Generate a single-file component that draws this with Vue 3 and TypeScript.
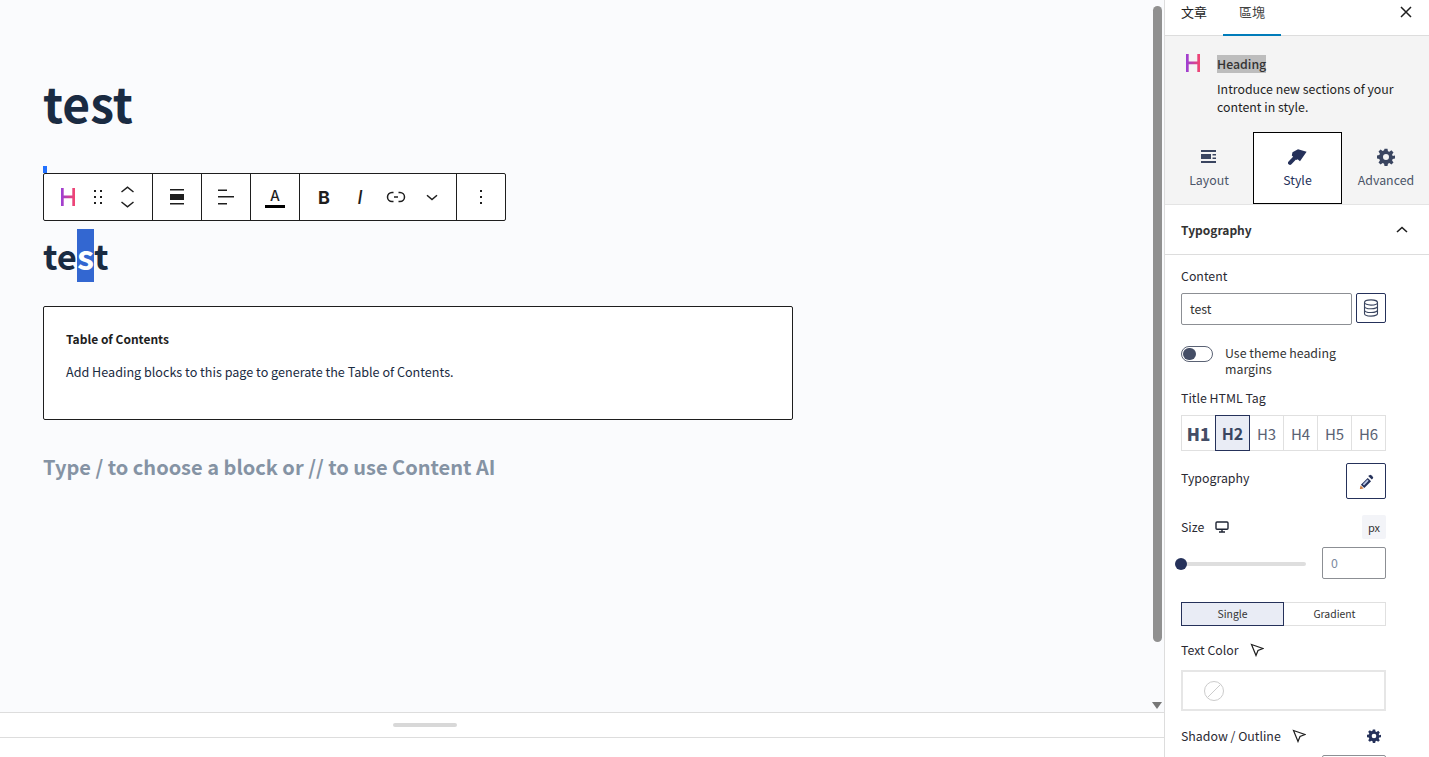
<script setup lang="ts">
const tags: string[] = ['H1', 'H2', 'H3', 'H4', 'H5', 'H6']
</script>

<template>
  <div class="page">
    <main class="editor">
      <div class="canvas">
        <div class="doc">
          <h1 class="title">test</h1>
          <div class="caret"></div>
          <div class="toolbar">
            <div class="group g1">
              <svg class="ico" width="24" height="24" viewBox="0 0 24 24">
                <defs>
                  <linearGradient id="hg" x1="0" y1="0" x2="1" y2="0">
                    <stop offset="0" stop-color="#9b3fd6" />
                    <stop offset="1" stop-color="#f4456e" />
                  </linearGradient>
                </defs>
                <path d="M4 3h2.7v7.6h8.6V3H18v18h-2.7v-7.7H6.7V21H4z" fill="url(#hg)" />
              </svg>
              <svg class="ico drag" width="24" height="24" viewBox="0 0 24 24" fill="#1e1e1e">
                <rect x="7" y="5" width="2" height="2" /><rect x="13" y="5" width="2" height="2" />
                <rect x="7" y="11" width="2" height="2" /><rect x="13" y="11" width="2" height="2" />
                <rect x="7" y="17" width="2" height="2" /><rect x="13" y="17" width="2" height="2" />
              </svg>
              <svg class="ico mover" width="24" height="32" viewBox="0 0 24 32" fill="none" stroke="#1e1e1e" stroke-width="1.5">
                <path d="M4.5 11 10.5 6.2 16.5 11" /><path d="M4.5 21 10.5 25.8 16.5 21" />
              </svg>
            </div>
            <div class="group g2">
              <svg width="24" height="24" viewBox="0 0 24 24" fill="#1e1e1e">
                <rect x="5" y="4" width="14" height="1.5" /><rect x="5" y="9" width="14" height="6" /><rect x="5" y="18" width="14" height="1.5" />
              </svg>
            </div>
            <div class="group g2">
              <svg width="24" height="24" viewBox="0 0 24 24" fill="#1e1e1e">
                <rect x="4" y="4.5" width="9" height="1.5" /><rect x="4" y="11" width="16" height="1.5" /><rect x="4" y="18" width="9" height="1.5" />
              </svg>
            </div>
            <div class="group g2">
              <div class="color-a"><span>A</span><i></i></div>
            </div>
            <div class="group g3">
              <span class="fmt bold">B</span>
              <span class="fmt italic">I</span>
              <span class="fmt">
                <svg width="24" height="24" viewBox="0 0 24 24" fill="none" stroke="#1e1e1e" stroke-width="1.5">
                  <path d="M9.5 7.5H8a4.5 4.5 0 0 0 0 9h1.5" /><path d="M14.5 7.5H16a4.5 4.5 0 0 1 0 9h-1.5" /><path d="M10 12h4" />
                </svg>
              </span>
              <span class="fmt">
                <svg width="24" height="24" viewBox="0 0 24 24" fill="none" stroke="#1e1e1e" stroke-width="1.5">
                  <path d="M7 10.2l5 4.3 5-4.3" />
                </svg>
              </span>
            </div>
            <div class="group g4">
              <svg width="24" height="24" viewBox="0 0 24 24" fill="#1e1e1e">
                <rect x="11" y="5" width="2" height="2" /><rect x="11" y="11" width="2" height="2" /><rect x="11" y="17" width="2" height="2" />
              </svg>
            </div>
          </div>
          <h2 class="heading">te<span class="sel">s</span>t</h2>
          <div class="toc">
            <div class="toc-title">Table of Contents</div>
            <p class="toc-text">Add Heading blocks to this page to generate the Table of Contents.</p>
          </div>
          <p class="placeholder">Type / to choose a block or // to use Content AI</p>
        </div>
        <div class="scrollbar">
          <div class="thumb"></div>
          <div class="arrow"></div>
        </div>
      </div>
      <div class="resize"><div class="handle"></div></div>
      <div class="footer"></div>
    </main>

    <aside class="side">
      <div class="tabs">
        <span class="tab">文章</span>
        <span class="tab active">區塊</span>
        <svg class="close" width="24" height="24" viewBox="0 0 24 24" fill="none" stroke="#1e1e1e" stroke-width="1.5">
          <path d="M7 7l10 10M17 7 7 17" />
        </svg>
      </div>
      <div class="card">
        <div class="card-head">
          <svg width="24" height="24" viewBox="0 0 24 24">
            <defs>
              <linearGradient id="hg2" x1="0" y1="0" x2="1" y2="0">
                <stop offset="0" stop-color="#9b3fd6" />
                <stop offset="1" stop-color="#f4456e" />
              </linearGradient>
            </defs>
            <path d="M4 3h2.7v7.6h8.6V3H18v18h-2.7v-7.7H6.7V21H4z" fill="url(#hg2)" />
          </svg>
          <div class="card-text">
            <div class="card-name"><span>Heading</span></div>
            <p>Introduce new sections of your content in style.</p>
          </div>
        </div>
        <div class="modes">
          <div class="mode">
            <svg width="16" height="14" viewBox="0 0 16 14" fill="#3a4560">
              <rect x="0" y="0" width="15" height="2" /><rect x="0" y="4" width="10" height="5" /><rect x="11.5" y="4" width="3.5" height="1.5" /><rect x="11.5" y="7.5" width="3.5" height="1.5" /><rect x="0" y="11" width="15" height="2" />
            </svg>
            <span>Layout</span>
          </div>
          <div class="mode on">
            <svg width="19" height="16" viewBox="0 0 19 16" fill="#25315a">
              <path d="M4.5 3.2 10 0.3 18.6 2.7 12 12.2 9.6 10.3 8.6 11 3.8 6.5z" />
              <path d="M2 13.8 7 8.6" fill="none" stroke="#25315a" stroke-width="4" stroke-linecap="round" />
            </svg>
            <span>Style</span>
          </div>
          <div class="mode adv">
            <svg width="18" height="18" viewBox="0 0 24 24" fill="#3a4560">
              <path fill-rule="evenodd" d="M10 1h4l.6 3.2 1.9.8 2.7-1.9 2.8 2.8-1.9 2.7.8 1.9L24 10v4l-3.1.6-.8 1.9 1.9 2.7-2.8 2.8-2.7-1.9-1.9.8L14 24h-4l-.6-3.1-1.9-.8-2.7 1.9-2.8-2.8 1.9-2.7-.8-1.9L0 14v-4l3.1-.6.8-1.9L2 4.8 4.8 2l2.7 1.9 1.9-.8zM12 8a4 4 0 1 0 0 8 4 4 0 0 0 0-8z" />
            </svg>
            <span>Advanced</span>
          </div>
        </div>
      </div>

      <div class="panel-head">
        <span>Typography</span>
        <svg width="14" height="14" viewBox="0 0 14 14" fill="none" stroke="#1e1e1e" stroke-width="1.6">
          <path d="M2 9l5-4.5L12 9" />
        </svg>
      </div>

      <div class="panel">
        <label class="lbl content-lbl">Content</label>
        <div class="content-row">
          <div class="input">test</div>
          <button class="db">
            <svg width="16" height="18" viewBox="0 0 16 18" fill="none" stroke="#3a4560" stroke-width="1.1">
              <ellipse cx="8" cy="3.5" rx="6.5" ry="2.6" />
              <path d="M1.5 3.5v11c0 1.5 3 2.6 6.5 2.6s6.5-1.1 6.5-2.6v-11" />
              <path d="M1.5 7.2c0 1.5 3 2.6 6.5 2.6s6.5-1.1 6.5-2.6" />
              <path d="M1.5 10.9c0 1.5 3 2.6 6.5 2.6s6.5-1.1 6.5-2.6" />
            </svg>
          </button>
        </div>

        <div class="toggle-row">
          <div class="toggle"><i></i></div>
          <span>Use theme heading margins</span>
        </div>

        <label class="lbl tag-lbl">Title HTML Tag</label>
        <div class="tags">
          <span v-for="(t, i) in tags" :key="t" class="tagb" :class="{ b1: i === 0, b2: i === 1 }">{{ t }}</span>
        </div>

        <div class="typo-row">
          <span class="lbl">Typography</span>
          <button class="pen">
            <svg width="15" height="15" viewBox="0 0 15 15">
              <path d="M10.4 1.2a1.3 1.3 0 0 1 1.8 0l1.6 1.6a1.3 1.3 0 0 1 0 1.8l-1 1-3.4-3.4z" fill="#25315a" />
              <path d="M8.7 3.9l3.4 3.4-6.8 6.8-3.4-3.4z" fill="#25315a" />
              <path d="M8.4 5.6l1.2 1.2-4.6 4.6-1.2-1.2z" fill="#b9c6e4" />
              <path d="M1.6 11.4l3 3-3.8.8z" fill="#c9773a" />
            </svg>
          </button>
        </div>

        <div class="size-row">
          <span class="lbl">Size</span>
          <svg class="monitor" width="14" height="12" viewBox="0 0 14 12" fill="none" stroke="#1e2433" stroke-width="1.4">
            <rect x="1" y="1" width="12" height="7.2" rx="1" /><path d="M7 8.5v2M4 11h6" />
          </svg>
          <span class="px">px</span>
        </div>

        <div class="slider-row">
          <div class="track"><i></i></div>
          <div class="num">0</div>
        </div>

        <div class="seg">
          <span class="seg-a">Single</span>
          <span class="seg-b">Gradient</span>
        </div>

        <div class="color-row">
          <span class="lbl">Text Color</span>
          <svg class="cursor" width="14" height="14" viewBox="0 0 14 14" fill="none" stroke="#1e1e1e" stroke-width="1.2">
            <path d="M1.5 1.5 13 5.5 8 7.5 6 12.5z" />
          </svg>
        </div>
        <div class="swatch">
          <svg width="22" height="22" viewBox="0 0 22 22" fill="none" stroke="#ccc" stroke-width="1">
            <circle cx="11" cy="11" r="9.5" /><path d="M4.5 17.5l13-13" />
          </svg>
        </div>

        <div class="shadow-row">
          <span class="lbl">Shadow / Outline</span>
          <svg class="cursor" width="14" height="14" viewBox="0 0 14 14" fill="none" stroke="#1e1e1e" stroke-width="1.2">
            <path d="M1.5 1.5 13 5.5 8 7.5 6 12.5z" />
          </svg>
          <svg class="gear" width="14" height="14" viewBox="0 0 24 24" fill="#25315a">
            <path fill-rule="evenodd" d="M10 1h4l.6 3.2 1.9.8 2.7-1.9 2.8 2.8-1.9 2.7.8 1.9L24 10v4l-3.1.6-.8 1.9 1.9 2.7-2.8 2.8-2.7-1.9-1.9.8L14 24h-4l-.6-3.1-1.9-.8-2.7 1.9-2.8-2.8 1.9-2.7-.8-1.9L0 14v-4l3.1-.6.8-1.9L2 4.8 4.8 2l2.7 1.9 1.9-.8zM12 8a4 4 0 1 0 0 8 4 4 0 0 0 0-8z" />
          </svg>
        </div>
        <div class="cut-input"></div>
      </div>
    </aside>
  </div>
</template>

<style>
html, body { margin: 0; background: #fff; overflow: hidden; }
</style>

<style scoped>
.page {
  display: flex;
  width: 1429px;
  height: 757px;
  overflow: hidden;
  font-family: "Noto Sans CJK TC", "Noto Sans", sans-serif;
  color: #1e1e1e;
}
.editor {
  width: 1164px;
  display: flex;
  flex-direction: column;
  flex: none;
}
.canvas {
  height: 712px;
  flex: none;
  background: #fafbfd;
  display: flex;
  justify-content: space-between;
  overflow: hidden;
}
.doc { padding-left: 43px; width: 750px; }
.title {
  margin: 70px 0 0;
  font-size: 48px;
  line-height: 64px;
  font-weight: 700;
  color: #1a2b42;
}
.caret { width: 4px; height: 7px; background: #2271ff; margin-top: 32px; }
.toolbar {
  width: 463px;
  height: 48px;
  box-sizing: border-box;
  border: 1px solid #1e1e1e;
  border-radius: 2px;
  background: #fff;
  display: flex;
}
.group {
  display: flex;
  align-items: center;
  justify-content: center;
  border-right: 1px solid #1e1e1e;
  box-sizing: border-box;
  height: 46px;
  flex: none;
}
.group:last-child { border-right: 0; }
.g1 { width: 109px; justify-content: flex-start; padding-left: 13px; }
.g1 .drag { margin-left: 6px; }
.g1 .mover { margin-left: 6px; }
.g2 { width: 49px; }
.g3 { width: 157px; padding-left: 6px; justify-content: flex-start; }
.g4 { flex: 1; }
.color-a {
  display: flex;
  flex-direction: column;
  align-items: center;
  width: 20px;
  margin-top: 2px;
  font-family: "Inter", sans-serif;
  font-size: 14px;
  line-height: 16px;
  font-weight: 500;
}
.color-a i { display: block; width: 20px; height: 3px; background: #000; margin-top: 1px; }
.fmt { width: 36px; display: flex; justify-content: center; align-items: center; font-family: "Inter", sans-serif; font-size: 18px; }
.bold { font-weight: 700; }
.italic { font-style: italic; font-weight: 500; }
.heading {
  margin: 8px 0 0;
  height: 53px;
  font-size: 34.5px;
  line-height: 53px;
  font-weight: 700;
  color: #1a2b42;
}
.sel { display: inline-block; background: #3367d1; color: #fff; }
.toc {
  margin-top: 24px;
  width: 750px;
  height: 114px;
  box-sizing: border-box;
  border: 1px solid #1e1e1e;
  border-radius: 2px;
  background: #fff;
  padding: 23px 22px;
}
.toc-title { font-size: 12px; font-weight: 700; line-height: 18px; color: #1e1e1e; }
.toc-text { margin: 15px 0 0; font-size: 12.6px; line-height: 18px; color: #1a2b42; }
.placeholder {
  margin: 30px 0 0;
  font-size: 20px;
  line-height: 34px;
  font-weight: 700;
  color: #8593a4;
}
.scrollbar {
  width: 12px;
  margin-right: 1px;
  display: flex;
  flex-direction: column;
  align-items: center;
}
.thumb { width: 9px; height: 636px; margin-top: 6px; background: #909090; border-radius: 5px; }
.arrow {
  margin-top: 60px;
  width: 0;
  height: 0;
  border-left: 5px solid transparent;
  border-right: 5px solid transparent;
  border-top: 7px solid #777;
}
.resize {
  height: 26px;
  box-sizing: border-box;
  border-top: 1px solid #ddd;
  border-bottom: 1px solid #ddd;
  display: flex;
  align-items: center;
  justify-content: center;
  background: #fff;
  flex: none;
}
.handle { width: 64px; height: 4px; border-radius: 2px; background: #d8d8d8; margin-right: 314px; }
.footer { flex: 1; background: #fff; }

.side {
  width: 265px;
  flex: none;
  box-sizing: border-box;
  border-left: 1px solid #ddd;
  background: #fff;
  overflow: hidden;
  font-size: 12.35px;
}
.tabs {
  height: 36px;
  box-sizing: border-box;
  border-bottom: 1px solid #ddd;
  display: flex;
  align-items: flex-start;
  padding-left: 16px;
}
.tab { width: 58px; height: 36px; box-sizing: border-box; line-height: 24px; font-size: 13px; color: #1e1e1e; }
.tab.active { width: 58px; text-align: center; color: #444; border-bottom: 2px solid #007cba; }
.tabs .tab:first-child { width: 42px; }
.close { margin-left: auto; margin-right: 11px; }
.card { height: 169px; box-sizing: border-box; background: #f4f4f4; border-bottom: 1px solid #e4e4e4; }
.card-head { display: flex; padding: 15px 16px 0 17px; height: 96px; box-sizing: border-box; }
.card-head svg { flex: none; }
.card-text { margin-left: 11px; }
.card-name { line-height: 18px; margin-top: 4px; font-weight: 500; color: #333; }
.card-name span { background: #bdbdbd; }
.card-text p { margin: 7px 0 0; line-height: 18px; color: #1e1e1e; }
.modes { display: flex; justify-content: flex-start; height: 72px; }
.mode {
  width: 88px;
  box-sizing: border-box;
  display: flex;
  flex-direction: column;
  align-items: center;
  justify-content: flex-start;
  padding-top: 16px;
  color: #4b5568;
}
.mode svg { height: 18px; }
.mode span { margin-top: 5px; line-height: 18px; }
.mode.on { border: 1px solid #000; background: #fff; color: #25315a; padding-top: 15px; width: 89px; height: 72px; }
.mode.adv { width: 87px; padding-left: 1px; }
.panel-head {
  height: 50px;
  box-sizing: border-box;
  border-bottom: 1px solid #ddd;
  display: flex;
  align-items: center;
  justify-content: space-between;
  padding: 0 20px 0 16px;
  font-size: 12px;
  font-weight: 700;
  color: #333;
}
.panel { padding: 0 43px 0 16px; }
.lbl { font-size: 12.35px; line-height: 18px; color: #2a2a33; display: block; }
.content-lbl { margin-top: 12px; }
.content-row { display: flex; gap: 4px; margin-top: 8px; align-items: flex-start; }
.input {
  width: 171px;
  height: 32px;
  box-sizing: border-box;
  border: 1px solid #8c8f94;
  border-radius: 2px;
  padding-left: 8px;
  line-height: 30px;
  color: #333;
}
.db {
  width: 30px;
  height: 30px;
  padding: 0;
  border: 1px solid #25315a;
  border-radius: 2px;
  background: #fff;
  display: flex;
  align-items: center;
  justify-content: center;
}
.toggle-row { display: flex; align-items: center; margin-top: 20px; gap: 12px; }
.toggle-row span { line-height: 16px; width: 140px; color: #333; }
.toggle {
  width: 32px;
  height: 16px;
  box-sizing: border-box;
  border: 1px solid #5a6274;
  border-radius: 9px;
  display: flex;
  align-items: center;
  padding-left: 1px;
  align-self: flex-start;
  margin-top: 1px;
}
.toggle i { width: 12.5px; height: 12.5px; border-radius: 50%; background: #454e66; display: block; }
.tag-lbl { margin-top: 12px; }
.tags { display: flex; margin-top: 8px; width: 205px; }
.tagb {
  flex: 1;
  height: 36px;
  box-sizing: border-box;
  border: 1px solid #e0e0e0;
  margin-left: -1px;
  display: flex;
  align-items: center;
  justify-content: center;
  font-size: 15px;
  color: #5a6274;
}
.tagb:first-child { margin-left: 0; }
.b1 { font-size: 17px; font-weight: 900; color: #454e66; }
.b2 { background: #e9ecf5; border-color: #25315a; font-weight: 700; font-size: 16px; color: #3a4560; position: relative; }
.typo-row { display: flex; justify-content: space-between; margin-top: 12px; width: 205px; }
.typo-row .lbl { margin-top: 6px; }
.pen {
  width: 40px;
  height: 36px;
  padding: 0;
  border: 1px solid #25315a;
  border-radius: 2px;
  background: #fff;
  display: flex;
  align-items: center;
  justify-content: center;
}
.size-row { display: flex; align-items: center; margin-top: 16px; width: 205px; }
.monitor { margin-left: 11px; }
.px {
  margin-left: auto;
  width: 24px;
  height: 24px;
  border-radius: 2px;
  background: #f3f4f8;
  font-size: 11px;
  color: #333;
  display: flex;
  align-items: center;
  justify-content: center;
}
.slider-row { display: flex; align-items: center; margin-top: 8px; width: 205px; justify-content: space-between; }
.track { width: 125px; height: 4px; margin-top: 2px; border-radius: 2px; background: #dedede; position: relative; }
.track i { position: absolute; left: -6px; top: -4px; width: 12px; height: 12px; border-radius: 50%; background: #25315a; }
.num {
  width: 64px;
  height: 32px;
  box-sizing: border-box;
  border: 1px solid #8c8f94;
  border-radius: 2px;
  padding-left: 8px;
  line-height: 30px;
  color: #7d8aa0;
}
.seg { display: flex; margin-top: 23px; width: 205px; height: 24px; font-size: 10.4px; line-height: 22px; text-align: center; color: #333; }
.seg-a { width: 103px; box-sizing: border-box; border: 1px solid #25315a; background: #e9ecf5; }
.seg-b { flex: 1; box-sizing: border-box; border: 1px solid #e0e0e0; border-left: 0; }
.color-row { display: flex; align-items: center; margin-top: 15px; gap: 11px; }
.cursor { flex: none; }
.swatch {
  margin-top: 11px;
  width: 205px;
  height: 41px;
  box-sizing: border-box;
  border: 2px solid #e6e6e6;
  display: flex;
  align-items: center;
  padding-left: 20px;
}
.shadow-row { display: flex; align-items: center; margin-top: 16px; width: 205px; gap: 11px; }
.gear { margin-left: auto; margin-right: 5px; }
.cut-input { margin: 10px 0 0 141px; width: 64px; height: 32px; box-sizing: border-box; border: 1px solid #8c8f94; border-radius: 2px; }
</style>
